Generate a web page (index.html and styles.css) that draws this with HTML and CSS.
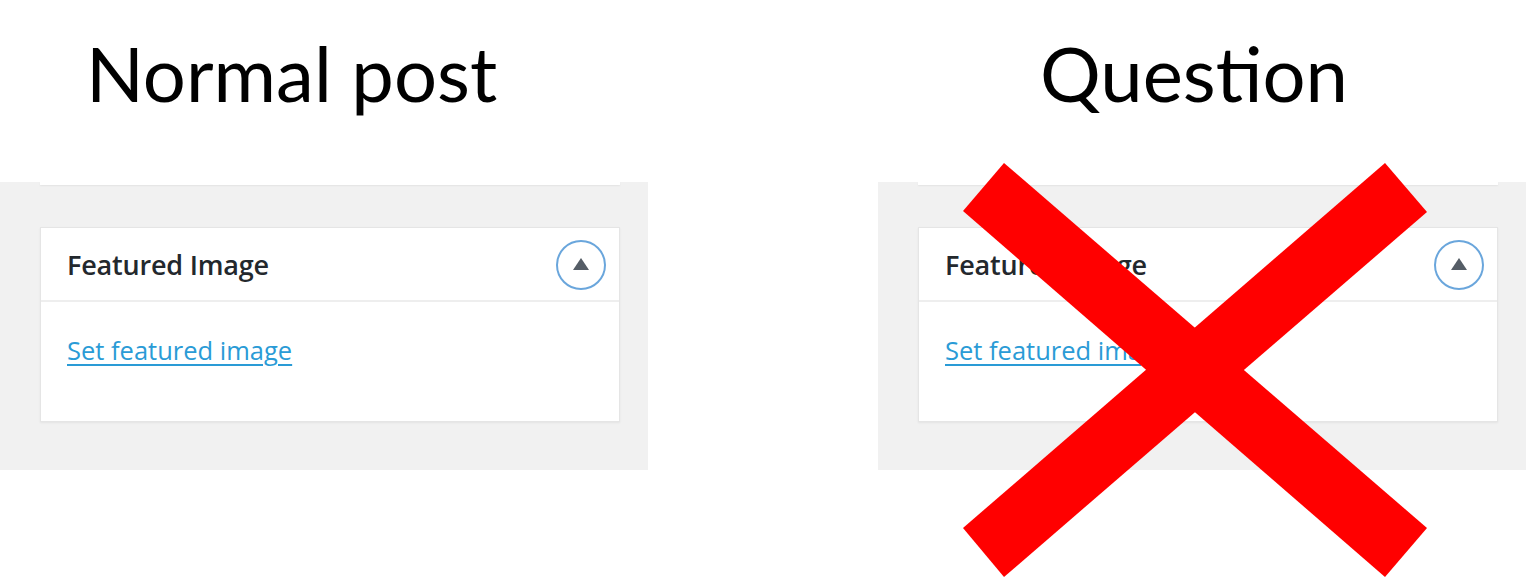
FILE: index.html
```html
<!DOCTYPE html>
<html lang="en">
<head>
    <meta charset="UTF-8">
    <meta name="viewport" content="width=device-width, initial-scale=1.0">
    <title>Normal post vs Question</title>
    <link rel="stylesheet" href="styles.css">
</head>
<body>
    <div class="compare">
        <div class="column">
            <h1 class="caption caption-normal">Normal post</h1>
            <div class="panel">
                <div class="prev-box"></div>
                <div class="postbox">
                    <div class="postbox-header">
                        <h2>Featured Image</h2>
                        <button class="toggle"><span class="arrow"></span></button>
                    </div>
                    <div class="postbox-inside">
                        <a href="#">Set featured image</a>
                    </div>
                </div>
            </div>
        </div>

        <div class="column column-question">
            <h1 class="caption caption-question">Question</h1>
            <div class="panel">
                <div class="prev-box"></div>
                <div class="postbox">
                    <div class="postbox-header">
                        <h2>Featured Image</h2>
                        <button class="toggle"><span class="arrow"></span></button>
                    </div>
                    <div class="postbox-inside">
                        <a href="#">Set featured image</a>
                    </div>
                </div>
            </div>
            <!-- big red cross over the second box -->
            <svg class="cross" width="648" height="578" viewBox="878 0 648 578">
                <polygon points="963,211 1004,163 1427,528 1385,577" fill="#ff0000"/>
                <polygon points="1385,163 1427,212 1004,577 963,528" fill="#ff0000"/>
            </svg>
        </div>
    </div>
</body>
</html>
```

FILE: styles.css
```css
*{
    box-sizing: border-box;
}
body{
    margin: 0;
    background-color: #ffffff;
    font-family: "Open Sans", "Noto Sans", sans-serif;
}

.compare{
    display: flex;
    gap: 230px;
    height: 578px;
}
.column{
    width: 648px;
    flex: none;
}
.column-question{
    position: relative;
}

.caption{
    margin: 0;
    height: 182px;
    padding-top: 28px;
    font-family: Lato, "Noto Sans", sans-serif;
    font-weight: normal;
    font-size: 76px;
    line-height: 90px;
    color: #000000;
}
.caption-normal{
    padding-left: 86px;
}
.caption-question{
    padding-left: 162px;
}

.panel{
    background-color: #f1f1f1;
    height: 288px;
    padding: 0 28px 0 40px;
}
.prev-box{
    height: 3px;
    background-color: #ffffff;
    box-shadow: 0 1px 2px rgba(0,0,0,0.06);
}

.postbox{
    margin-top: 42px;
    width: 580px;
    height: 195px;
    background-color: #ffffff;
    border: 1px solid #e5e5e5;
    box-shadow: 0 1px 2px rgba(0,0,0,0.06);
}
.postbox-header{
    display: flex;
    align-items: center;
    justify-content: space-between;
    height: 74px;
    padding: 0 13px 0 26px;
    border-bottom: 2px solid #eeeeee;
}
.postbox-header h2{
    margin: 0;
    font-size: 27px;
    font-weight: 600;
    color: #23282d;
    letter-spacing: -0.2px;
}

.toggle{
    all: unset;
    width: 46px;
    height: 46px;
    border: 2px solid #6aa6dc;
    border-radius: 50%;
    display: flex;
    align-items: center;
    justify-content: center;
    margin-top: 2px;
    cursor: pointer;
}
.arrow{
    width: 0;
    height: 0;
    border-left: 8px solid transparent;
    border-right: 8px solid transparent;
    border-bottom: 12px solid #555d66;
    margin-top: -2px;
}

.postbox-inside{
    padding: 31px 26px 0 26px;
}
.postbox-inside a{
    font-size: 25.5px;
    color: #2a9bd6;
    text-decoration: underline;
    text-underline-offset: 4px;
    text-decoration-thickness: 2px;
}

.cross{
    position: absolute;
    left: 0;
    top: 0;
}
```
